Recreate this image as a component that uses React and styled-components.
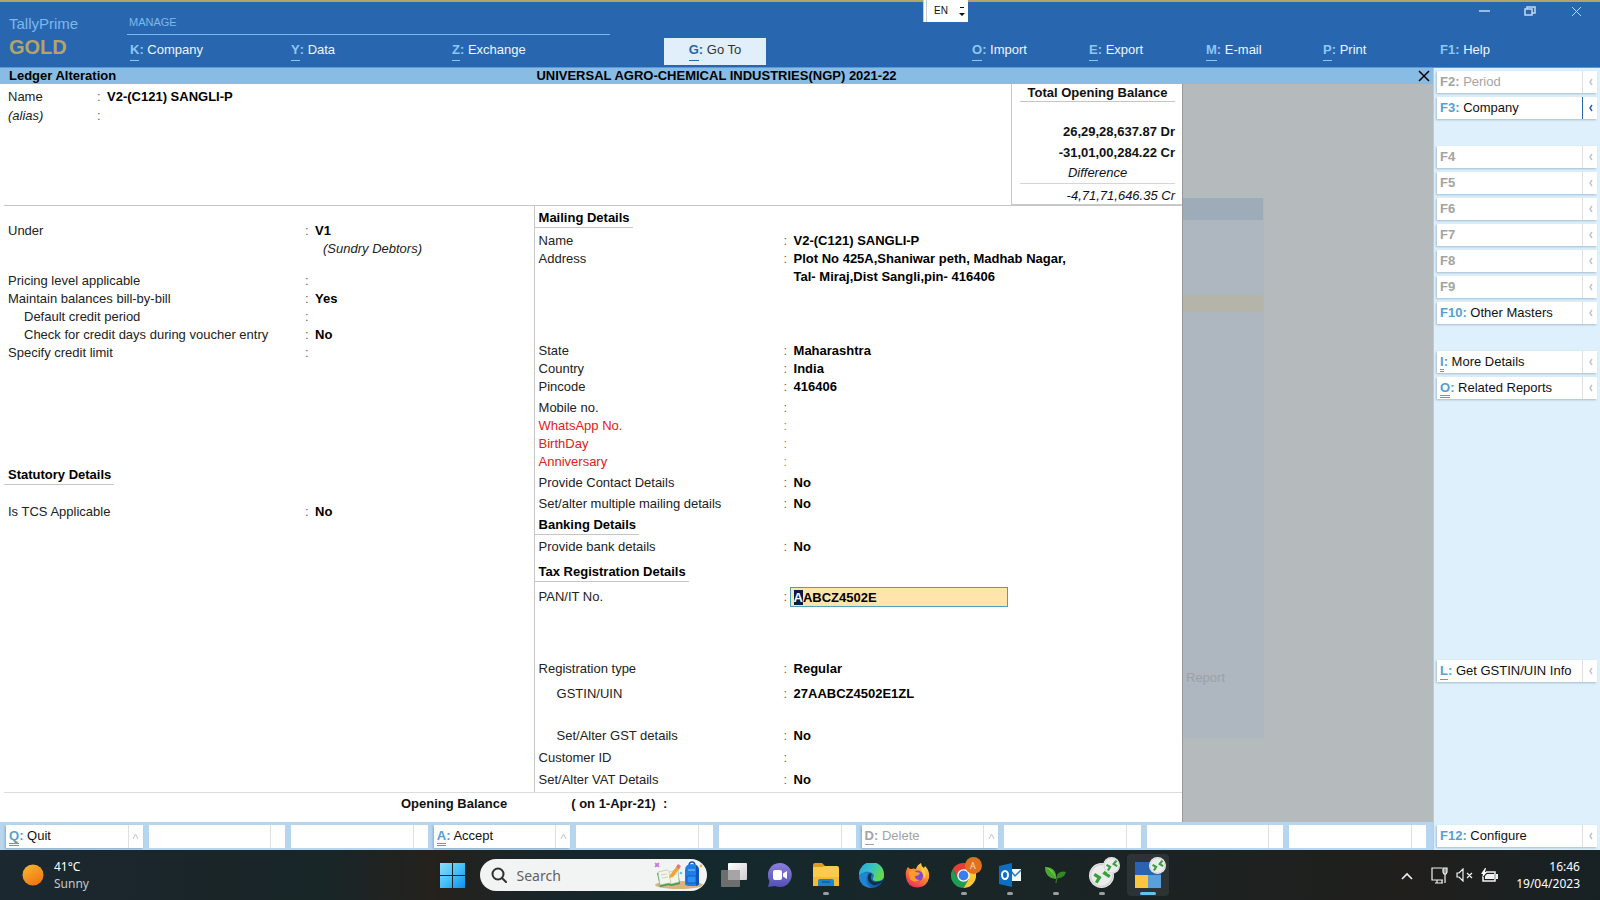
// App.jsx
import React, { useEffect, useRef } from "react";
import styled, { createGlobalStyle, css } from "styled-components";

const GlobalStyle = createGlobalStyle`
  * {
    box-sizing: border-box;
  }

  body {
    margin: 0;
    background: #b5babd;
    color: #111;
    font-family: "Liberation Sans", Arial, sans-serif;
    font-size: 13px;
    line-height: 18px;
  }

  h1, h2, p {
    margin: 0;
    font-size: 13px;
  }

  button, input {
    font: inherit;
    color: inherit;
    margin: 0;
    padding: 0;
    border: none;
    background: none;
  }

  button {
    cursor: pointer;
  }
`;

const Page = styled.div`
  display: flex;
  flex-direction: column;
  min-height: 100vh;
`;

/* ---------- top bar ---------- */

const TopBar = styled.header`
  position: relative;
  display: grid;
  grid-template-columns: 127px 483fr 54fr 102px 206fr 628fr;
  grid-template-rows: 33px 32px;
  background: #2867b0;
  border-top: 2px solid #b4a468;
  border-bottom: 1px solid #5b98d6;
`;

const Brand = styled.div`
  grid-row: 1 / 3;
  padding: 13px 0 0 9px;
  color: #7db8ec;
  font-size: 15px;
`;

const Edition = styled.div`
  margin-top: 3px;
  color: #b4a468;
  font-size: 20px;
  line-height: 22px;
  font-weight: bold;
`;

const ManageTitle = styled.div`
  grid-column: 2;
  display: flex;
  align-items: flex-end;
  padding: 0 2px 3px;
  border-bottom: 1px solid #7db8ec;
  color: #7db8ec;
  font-size: 11px;
`;

const ManageMenu = styled.nav`
  grid-column: 2;
  grid-row: 2;
  display: grid;
  grid-template-columns: repeat(3, 1fr);
  align-items: center;
  padding-left: 3px;
  margin-right: -3px;
`;

const ToolMenu = styled.nav`
  grid-column: 6;
  grid-row: 2;
  display: grid;
  grid-template-columns: repeat(4, 1fr) 160px;
  align-items: center;
`;

const WindowButtons = styled.div`
  grid-column: 6;
  grid-row: 1;
  display: flex;
  justify-content: flex-end;
  align-items: flex-start;
  padding-right: 1px;
`;

const WindowButton = styled.button`
  display: flex;
  justify-content: center;
  align-items: center;
  width: 46px;
  height: 18px;
  color: #c3d9ef;
`;

const MenuButton = styled.button`
  text-align: left;
  color: #eef6fd;
`;

const GoToButton = styled.button`
  grid-column: 4;
  grid-row: 2;
  align-self: center;
  height: 27px;
  background: #e1effb;
  color: #333;
`;

/* the bold letter before each command, underlined once or twice */
const Key = styled.b`
  color: ${({ $color }) => $color || "#8cc8f4"};
`;

const KeyLetter = styled.span`
  display: inline-block;
  height: ${({ $lines }) => ($lines === 2 ? 21 : 20)}px;
  ${({ $lines }) => $lines === 1 && css`border-bottom: 1px solid currentColor;`}
  ${({ $lines }) => $lines === 2 && css`border-bottom: 3px double currentColor;`}
`;

const Language = styled.button`
  position: absolute;
  top: -2px;
  left: 923px;
  display: flex;
  align-items: center;
  gap: 11px;
  width: 45px;
  height: 22px;
  padding-left: 7px;
  background: #fff;
  border-left: 4px double #ccc;
  color: #111;
  font-size: 10px;
`;

/* ---------- workspace ---------- */

const Middle = styled.div`
  flex: 1;
  display: grid;
  grid-template-columns: minmax(0, 1fr) 167px;
`;

const Workspace = styled.main`
  display: flex;
  flex-direction: column;
`;

const TitleBar = styled.div`
  display: grid;
  grid-template-columns: 1fr auto 1fr;
  align-items: center;
  height: 16px;
  background: #88bce4;
  color: #000;
  line-height: 16px;
`;

const ScreenName = styled.b`
  padding-left: 9px;
`;

const CloseButton = styled.button`
  justify-self: end;
  display: flex;
  width: 15px;
`;

const Desk = styled.div`
  flex: 1;
  display: grid;
  grid-template-columns: 1183fr 250fr;
`;

const Ledger = styled.section`
  display: flex;
  flex-direction: column;
  background: #fff;
  border-right: 1px solid #96999b;
`;

const LedgerTop = styled.div`
  display: flex;
  justify-content: space-between;
  height: 122px;
  margin-left: 4px;
  padding-left: 4px;
  border-bottom: 1px solid #c6c6c6;
`;

const TopFields = styled.div`
  padding-top: 4px;
`;

const Balance = styled.div`
  width: 171px;
  padding: 0 7px 0 8px;
  border-left: 1px solid #c9c9c9;
  border-bottom: 1px solid #c9c9c9;
  text-align: right;
  line-height: 21px;
`;

const BalanceTitle = styled.h2`
  margin-bottom: 19px;
  border-bottom: 1px solid #c6c6c6;
  line-height: 17px;
  text-align: center;
`;

const BalanceAmount = styled.p`
  font-weight: bold;
`;

const BalanceNote = styled.p`
  border-bottom: 1px solid #d6d6d6;
  font-style: italic;
  line-height: 20px;
  text-align: center;
`;

const BalanceTotal = styled.p`
  font-style: italic;
  line-height: 23px;
`;

const LedgerBody = styled.div`
  flex: 1;
  display: grid;
  grid-template-columns: 530fr 649fr;
  margin-left: 4px;
  border-bottom: 1px solid #ddd;
`;

const Column = styled.div`
  border-left: ${({ $side }) => ($side === "right" ? "1px solid #c6c6c6" : "none")};
`;

const Heading = styled.h2`
  width: fit-content;
  margin-top: ${({ $gap }) => $gap}px;
  padding: 0 3px 0 4px;
  border-bottom: 1px solid #c6c6c6;
  color: #000;
`;

const Row = styled.div`
  display: grid;
  grid-template-columns: ${({ $label }) => $label}px 8px auto;
  margin-top: ${({ $gap }) => $gap || 0}px;
  padding-left: ${({ $inset }) => $inset || 0}px;
  color: ${({ $red }) => ($red ? "#e02020" : "#222")};
  white-space: nowrap;
`;

const Label = styled.label`
  padding-left: ${({ $indent }) => $indent || 0}px;
  font-style: ${({ $italic }) => ($italic ? "italic" : "normal")};
`;

const Colon = styled.span`
  opacity: 0.7;
`;

const Value = styled.span`
  padding-left: 2px;
  color: #000;
  font-weight: bold;
`;

const Parent = styled.span`
  padding-left: 10px;
  font-style: italic;
`;

const PanInput = styled.input`
  width: 218px;
  height: 20px;
  margin: -1px 0 -1px -2px;
  padding-left: 3px;
  background: #ffe5ab;
  border: 1px solid #4f9fb8;
  color: #000;
  font-weight: bold;
  outline: none;
  caret-color: transparent;

  &::selection {
    background: #081a4c;
    color: #fff;
  }
`;

const OpeningBalance = styled.div`
  display: flex;
  gap: 64px;
  padding: 2px 0 9px 401px;
  font-weight: bold;
  white-space: pre;
`;

/* the dimmed menu that stays behind the open ledger */
const Behind = styled.div`
  padding-top: 114px;
  background: #b5babd;
`;

const DimMenu = styled.div`
  width: 81px;
  height: 540px;
  background: #aeb6bf;
  border-right: 1px solid #b0b7bb;
  color: #9ba2a9;
`;

const DimTitle = styled.div`
  height: 22px;
  margin-bottom: 75px;
  background: #9eabb8;
`;

const DimChoice = styled.div`
  height: 17px;
  margin-bottom: 357px;
  background: #b4b5a8;
`;

const DimItem = styled.div`
  padding-left: 3px;
`;

const BottomBar = styled.div`
  display: grid;
  grid-template-columns: repeat(10, 1fr);
  gap: 6px;
  padding: 3px 7px 2px 6px;
  background: #b6d6ef;
`;

/* ---------- command buttons (bottom and right) ---------- */

const Command = styled.button`
  display: flex;
  justify-content: space-between;
  height: ${({ $short }) => ($short ? 23 : 22)}px;
  padding-left: 3px;
  background: #fff;
  box-shadow: ${({ $plain }) => ($plain ? "none" : "-1px 1px 2px rgba(60, 90, 120, 0.35)")};
  color: ${({ $off }) => ($off ? "#a3a3a3" : "#111")};
  line-height: 21px;
  text-align: left;
`;

const Arrow = styled.span`
  display: flex;
  justify-content: center;
  align-items: center;
  width: 15px;
  height: 100%;
  border-left: 1px solid ${({ $on }) => ($on ? "#2867b0" : "#dfdfdf")};
  color: ${({ $on }) => ($on ? "#2867b0" : "#c4c4c4")};
`;

const Sidebar = styled.aside`
  display: flex;
  flex-direction: column;
  padding: 3px;
  background: #def0fc;
  border-left: 1px solid #a8d0f0;
`;

const Group = styled.div`
  display: flex;
  flex-direction: column;
  gap: 4px;
  margin-bottom: ${({ $gap }) => $gap || 0}px;
`;

const Spacer = styled.div`
  flex: ${({ $grow }) => $grow};
`;

/* ---------- taskbar ---------- */

const Taskbar = styled.footer`
  display: grid;
  grid-template-columns: 1fr auto 1fr;
  align-items: center;
  height: 50px;
  background: linear-gradient(90deg, #1b2830 0%, #1a2528 14%, #182628 20%, #25211c 27%, #17262a 35%, #14292d 45%, #192527 62%, #201f1c 88%, #172124 100%);
  color: #fff;
  font-family: "Noto Sans", "Open Sans", sans-serif;
  font-size: 12px;
  line-height: 17px;
`;

const Weather = styled.button`
  display: flex;
  align-items: center;
  gap: 10px;
  justify-self: start;
  padding-left: 22px;
  text-align: left;
`;

const WeatherNote = styled.div`
  color: #c5c9ca;
`;

const Apps = styled.div`
  display: flex;
  align-items: center;
  gap: 4px;
`;

const AppButton = styled.button`
  position: relative;
  display: flex;
  justify-content: center;
  align-items: center;
  width: 42px;
  height: 42px;
  border-radius: 4px;
  background: ${({ $active }) => ($active ? "#2b3334" : "none")};

  &::after {
    content: "";
    position: absolute;
    bottom: 1px;
    left: 50%;
    width: ${({ $active }) => ($active ? 16 : 6)}px;
    height: 3px;
    margin-left: ${({ $active }) => ($active ? -8 : -3)}px;
    border-radius: 2px;
    background: ${({ $active }) => ($active ? "#60c3f0" : "#9a9fa0")};
    display: ${({ $open }) => ($open ? "block" : "none")};
  }
`;

const Badge = styled.span`
  position: absolute;
  top: 3px;
  right: 3px;
  display: flex;
  justify-content: center;
  align-items: center;
  width: 17px;
  height: 17px;
  border-radius: 50%;
  background: ${({ $color }) => $color};
  color: #f6dcc8;
  font-size: 9px;
`;

const SearchBox = styled.label`
  display: flex;
  align-items: center;
  width: 227px;
  height: 32px;
  margin: 0 2px;
  padding: 0 3px 0 11px;
  border-radius: 16px;
  background: #f2f3f3;
`;

const SearchInput = styled.input`
  flex: 1;
  min-width: 0;
  padding-left: 10px;
  font-size: 14px;
  outline: none;

  &::placeholder {
    color: #5f6263;
    opacity: 1;
  }
`;

const Tray = styled.div`
  display: flex;
  align-items: center;
  justify-self: end;
  padding-right: 20px;
`;

const TrayIcons = styled.button`
  display: flex;
  align-items: center;
  gap: 8px;
  margin: 0 18px;
`;

const Clock = styled.button`
  text-align: right;
`;

/* ---------- drawings ---------- */

const WindowsLogo = () => (
  <svg width="25" height="25" viewBox="0 0 25 25">
    <defs>
      <linearGradient id="win" x1="0" y1="0" x2="1" y2="1">
        <stop offset="0" stopColor="#8be0fb" />
        <stop offset="0.5" stopColor="#45c2f7" />
        <stop offset="1" stopColor="#0d8df0" />
      </linearGradient>
    </defs>
    <path fill="url(#win)" d="M0 0h12v12H0zM13 0h12v12H13zM0 13h12v12H0zM13 13h12v12H13z" />
  </svg>
);

const SunIcon = () => (
  <svg width="22" height="22" viewBox="0 0 22 22">
    <defs>
      <linearGradient id="sun" x1="0.2" y1="0" x2="0.8" y2="1">
        <stop offset="0" stopColor="#f7b52f" />
        <stop offset="1" stopColor="#f0700f" />
      </linearGradient>
    </defs>
    <circle cx="11" cy="11" r="10.5" fill="url(#sun)" />
  </svg>
);

const SearchArt = () => (
  <svg width="52" height="28" viewBox="0 0 52 28">
    <ellipse cx="27" cy="24" rx="24" ry="4" fill="#d9b380" />
    <path d="M5 12l10-2 3 3 8-3 2 13-9 2-2-1-9 2z" fill="#3f9b54" />
    <path d="M6 11l9-2 3 2 8-3 1 13-8 2-2-1-9 2z" fill="#f3f6ea" stroke="#a8c8a0" strokeWidth="0.7" />
    <path d="M17 11l2 12M9 14l6-1M10 17l6-1M20 14l5-1" stroke="#a9bda6" strokeWidth="0.6" />
    <path d="M18 14l7-9 3 2-7 9-4 1z" fill="#f2a33a" />
    <path d="M24 6l2-3 3 2-2 3z" fill="#e67585" />
    <path d="M3 2l2 1 2-1-1 2 1 2-2-1-2 1 1-2z" fill="#c77be0" stroke="#c77be0" />
    <path d="M37 5q0-4 3-4t3 4" stroke="#1456b8" strokeWidth="1.6" fill="none" />
    <path d="M33 9q0-6 7-6t7 6v14q0 2-7 2t-7-2z" fill="#1f7ee8" />
    <path d="M44 4q3 2 3 5v14q0 1-3 2z" fill="#0f54bd" />
    <path d="M35 15h9v7h-9z" fill="#2a91f5" stroke="#0f54bd" strokeWidth="0.8" />
    <path d="M36 9h7" stroke="#7fc0ff" strokeWidth="1.2" />
    <circle cx="49" cy="5" r="1.4" fill="#f1b434" />
    <circle cx="29" cy="12" r="1.3" fill="#54c9e8" />
  </svg>
);

const TaskViewIcon = () => (
  <svg width="26" height="24" viewBox="0 0 26 24">
    <defs>
      <linearGradient id="view" x1="0" y1="0" x2="1" y2="1">
        <stop offset="0" stopColor="#fff" />
        <stop offset="1" stopColor="#cfcfcf" />
      </linearGradient>
    </defs>
    <rect x="7" y="0" width="19" height="17" rx="1" fill="url(#view)" />
    <rect x="0" y="7" width="19" height="17" rx="1" fill="#777" fillOpacity="0.9" />
    <path d="M7 7h12v10H7z" fill="#a5a5a5" />
  </svg>
);

const ChatIcon = () => (
  <svg width="24" height="24" viewBox="0 0 24 24">
    <defs>
      <linearGradient id="chat" x1="0" y1="0" x2="0" y2="1">
        <stop offset="0" stopColor="#8b7fd8" />
        <stop offset="1" stopColor="#5450b8" />
      </linearGradient>
    </defs>
    <path d="M12 0a12 12 0 1 1-5 23L0 24l1.5-6A12 12 0 0 1 12 0z" fill="url(#chat)" />
    <rect x="5" y="7" width="9" height="10" rx="2" fill="#fff" />
    <path d="M15 10.5l4-2.5v8l-4-2.5z" fill="#fff" />
  </svg>
);

const FolderIcon = () => (
  <svg width="26" height="24" viewBox="0 0 26 24">
    <path d="M0 2q0-2 2-2h7l3 3v4H0z" fill="#dd9c1c" />
    <path d="M0 5q0-1 1-1h8l3-1h12q2 0 2 2v18H0z" fill="#fbcb4b" />
    <path d="M0 14h26v9H0z" fill="#f5bb36" />
    <path d="M5 18q0-2 2-2h12q2 0 2 2v5H5z" fill="#1c84cf" />
    <path d="M9 19h8" stroke="#0d5f9f" strokeWidth="1.5" />
  </svg>
);

const EdgeIcon = () => (
  <svg width="25" height="25" viewBox="0 0 25 25">
    <defs>
      <linearGradient id="edgeTop" x1="0" y1="0" x2="1" y2="0.5">
        <stop offset="0" stopColor="#2b9fe0" />
        <stop offset="0.5" stopColor="#35c1c8" />
        <stop offset="1" stopColor="#63d94f" />
      </linearGradient>
      <linearGradient id="edgeLow" x1="0" y1="0" x2="1" y2="1">
        <stop offset="0" stopColor="#2396e0" />
        <stop offset="1" stopColor="#0f4f9c" />
      </linearGradient>
    </defs>
    <circle cx="12.5" cy="12.5" r="12.5" fill="url(#edgeLow)" />
    <path d="M0 12A12.5 12.5 0 0 1 25 11q1 7-7 7-5 0-4-3 2-3-1-5Q8 6 0 12z" fill="url(#edgeTop)" />
    <path d="M9 12q-2 7 5 10 5 1 9-3a12 12 0 0 0 1-2q-9 5-12-1-1-3 1-5-2-2-4 1z" fill="#142f4b" />
    <path d="M9 11q-5 8 3 14-11-1-12-11 4-6 9-3z" fill="#1f86d4" />
  </svg>
);

const FirefoxIcon = () => (
  <svg width="25" height="25" viewBox="0 0 25 25">
    <defs>
      <linearGradient id="fox" x1="0.8" y1="0" x2="0.2" y2="1">
        <stop offset="0" stopColor="#ffe14a" />
        <stop offset="0.45" stopColor="#ff8a2a" />
        <stop offset="1" stopColor="#f0245e" />
      </linearGradient>
    </defs>
    <path d="M3 4q1 2 3 2 3-1 5 0 1-4 5-6 0 3 3 5l1-2q5 5 4 12-2 9-11.5 9.500Q2 24 1 14 0 8 3 4z" fill="url(#fox)" />
    <circle cx="12.5" cy="13" r="5.5" fill="#7f48d8" />
    <path d="M4 8q5-2 7 1l4 1q-1 3-5 3 0 4 5 4-6 4-10-1-2-4-1-8z" fill="#ff9b2d" />
    <path d="M17 9q3 3 1 7 4-3 2-8-1-3-4-3z" fill="#ffd23e" />
  </svg>
);

const ChromeIcon = () => (
  <svg width="25" height="25" viewBox="0 0 24 24">
    <path d="M12 12L1.600 6A12 12 0 0 1 22.400 6z" fill="#e34133" />
    <path d="M1.600 6l5.200 9 5.200-9z" fill="#e34133" />
    <path d="M12 24A12 12 0 0 1 1.600 6l5.200 9 5.200-3 5.200 3z" fill="#1f9d55" />
    <path d="M17.200 15L12 24A12 12 0 0 0 22.400 6H12v6z" fill="#fcc934" />
    <circle cx="12" cy="12" r="6" fill="#fff" />
    <circle cx="12" cy="12" r="4.7" fill="#3b7ded" />
  </svg>
);

const OutlookIcon = () => (
  <svg width="24" height="24" viewBox="0 0 24 24">
    <path d="M13 6h10v12H13z" fill="#f4f9fd" />
    <path d="M13 8l4 5 6-6" stroke="#2b79c2" strokeWidth="1.5" fill="none" />
    <path d="M1 3l13-3v24L1 21z" fill="#0e6fc2" />
    <ellipse cx="7" cy="12" rx="3" ry="4" fill="none" stroke="#fff" strokeWidth="2" />
  </svg>
);

const LeafIcon = () => (
  <svg width="23" height="18" viewBox="0 0 23 18">
    <path d="M1 1q12 0 11 12Q1 12 1 1z" fill="#4aa832" />
    <path d="M1 1q9 5 11 12Q10 3 1 1z" fill="#8ad650" />
    <path d="M22 6q-8-2-10 6 8 1 10-6z" fill="#2f8a26" />
    <path d="M12 17q0-5 4-8" stroke="#3c7a2a" strokeWidth="1.2" fill="none" />
  </svg>
);

const RemoteIcon = ({ size }) => (
  <svg width={size} height={size} viewBox="0 0 24 24">
    <circle cx="12" cy="12" r="12" fill="#ececec" />
    <circle cx="12" cy="12" r="10.5" fill="none" stroke="#cdcdcd" />
    <path d="M5 11l5 3-3 5M19 5l-4 5 5 3" stroke="#379f3c" strokeWidth="3" fill="none" />
  </svg>
);

const TallyIcon = () => (
  <svg width="26" height="26" viewBox="0 0 26 26">
    <path d="M0 0h26v13H0z" fill="#2a64b0" />
    <path d="M0 13h13v13H0z" fill="#fdc63f" />
    <path d="M13 13h13v13H13z" fill="#5a9fdb" />
  </svg>
);

const MagnifierIcon = () => (
  <svg width="16" height="16" viewBox="0 0 16 16" fill="none" stroke="#2d2f30" strokeWidth="2">
    <circle cx="7" cy="7" r="5.5" />
    <path d="M11 11l4 4" strokeLinecap="round" />
  </svg>
);

const ChevronUp = () => (
  <svg width="12" height="8" viewBox="0 0 12 8" fill="none" stroke="#f2f2f2" strokeWidth="1.6">
    <path d="M1 7l5-5 5 5" />
  </svg>
);

const NetworkIcon = () => (
  <svg width="17" height="17" viewBox="0 0 17 17" fill="none" stroke="#f2f2f2" strokeWidth="1.2">
    <path d="M11 1H1v12h11M4 16h8M6 13v3M11 13v3M14 6v10" />
    <path d="M12 1h4v4l-1 2h-2l-1-2z" fill="#8e9292" />
  </svg>
);

const SpeakerIcon = () => (
  <svg width="17" height="14" viewBox="0 0 17 14" fill="none" stroke="#f2f2f2" strokeWidth="1.2">
    <path d="M1 5h2l4-4v12L3 9H1zM11 5l5 5M16 5l-5 5" />
  </svg>
);

const BatteryIcon = () => (
  <svg width="17" height="15" viewBox="0 0 17 15">
    <path d="M5 4h9v9H2V9" fill="none" stroke="#f2f2f2" strokeWidth="1.5" />
    <path d="M6 6h7v5H4V8zM15 6h2v5h-2z" fill="#f2f2f2" />
    <path d="M4 0L0 6h2L1 10l5-6H4l1-4z" fill="#fff" />
  </svg>
);

const LeftArrow = () => (
  <svg width="5" height="8" viewBox="0 0 5 8" fill="none" stroke="currentColor" strokeWidth="1.5">
    <path d="M4 1L2 4l2 3" />
  </svg>
);

const UpArrow = () => (
  <svg width="7" height="7" viewBox="0 0 7 7" fill="none" stroke="currentColor">
    <path d="M1 6l2.500-5L6 6" />
  </svg>
);

/* ---------- data ---------- */

const leftRows = [
  { label: "Under", value: "V1", gap: 16 },
  { label: "", parent: "(Sundry Debtors)" },
  { label: "Pricing level applicable", gap: 14 },
  { label: "Maintain balances bill-by-bill", value: "Yes" },
  { label: "Default credit period", indent: 16 },
  { label: "Check for credit days during voucher entry", value: "No", indent: 16 },
  { label: "Specify credit limit" },
  { heading: "Statutory Details", gap: 104 },
  { label: "Is TCS Applicable", value: "No", gap: 18 },
];

const rightRows = [
  { heading: "Mailing Details", gap: 3 },
  { label: "Name", value: "V2-(C121) SANGLI-P", gap: 4 },
  { label: "Address", value: "Plot No 425A,Shaniwar peth, Madhab Nagar," },
  { label: "", value: "Tal- Miraj,Dist Sangli,pin- 416406", noColon: true },
  { label: "State", value: "Maharashtra", gap: 56 },
  { label: "Country", value: "India" },
  { label: "Pincode", value: "416406" },
  { label: "Mobile no.", gap: 3 },
  { label: "WhatsApp No.", red: true },
  { label: "BirthDay", red: true },
  { label: "Anniversary", red: true },
  { label: "Provide Contact Details", value: "No", gap: 3 },
  { label: "Set/alter multiple mailing details", value: "No", gap: 3 },
  { heading: "Banking Details", gap: 3 },
  { label: "Provide bank details", value: "No", gap: 3 },
  { heading: "Tax Registration Details", gap: 7 },
  { label: "PAN/IT No.", input: "AABCZ4502E", gap: 6 },
  { label: "Registration type", value: "Regular", gap: 54 },
  { label: "GSTIN/UIN", value: "27AABCZ4502E1ZL", indent: 18, gap: 7 },
  { label: "Set/Alter GST details", value: "No", indent: 18, gap: 24 },
  { label: "Customer ID", gap: 4 },
  { label: "Set/Alter VAT Details", value: "No", gap: 4 },
];

const bottomCommands = [
  { letter: "Q", text: "Quit", lines: 2 },
  {},
  {},
  { letter: "A", text: "Accept", lines: 2 },
  {},
  {},
  { letter: "D", text: "Delete", lines: 1, off: true },
  {},
  {},
  {},
];

/* ---------- parts ---------- */

const CommandText = ({ letter, text, lines, color }) => (
  <span>
    <Key $color={color}>
      <KeyLetter $lines={lines}>{letter}</KeyLetter>
      {text && ":"}
    </Key>
    {text && ` ${text}`}
  </span>
);

const SideCommand = ({ letter, text, lines, off, on }) => (
  <Command disabled={off} $off={off}>
    <CommandText letter={letter} text={text} lines={lines} color={off ? "#a3a3a3" : "#559fd2"} />
    <Arrow $on={on}>
      <LeftArrow />
    </Arrow>
  </Command>
);

const PanField = ({ id, value }) => {
  const ref = useRef(null);

  useEffect(() => {
    ref.current.focus();
    ref.current.setSelectionRange(0, 1);
  }, []);

  return <PanInput id={id} ref={ref} defaultValue={value} />;
};

const FieldRow = ({ row, side }) => {
  if (row.heading) {
    return <Heading $gap={row.gap}>{row.heading}</Heading>;
  }

  return (
    <Row $gap={row.gap} $red={row.red} $inset={4} $label={side === "right" ? 245 : 297}>
      <Label as={row.input ? "label" : "span"} htmlFor={row.input && "pan"} $indent={row.indent}>
        {row.label}
      </Label>
      <Colon>{row.parent || row.noColon ? "" : ":"}</Colon>
      {row.input && <PanField id="pan" value={row.input} />}
      {row.value && <Value>{row.value}</Value>}
      {row.parent && <Parent>{row.parent}</Parent>}
    </Row>
  );
};

const App = () => {
  return (
    <Page>
      <GlobalStyle />
      <TopBar>
        <Brand>
          TallyPrime
          <Edition>GOLD</Edition>
        </Brand>
        <ManageTitle>MANAGE</ManageTitle>
        <ManageMenu>
          <MenuButton><CommandText letter="K" text="Company" lines={1} /></MenuButton>
          <MenuButton><CommandText letter="Y" text="Data" lines={1} /></MenuButton>
          <MenuButton><CommandText letter="Z" text="Exchange" lines={1} /></MenuButton>
        </ManageMenu>
        <GoToButton>
          <CommandText letter="G" text="Go To" lines={1} color="#2867b0" />
        </GoToButton>
        <WindowButtons>
          <WindowButton aria-label="Minimize">
            <svg width="11" height="2" viewBox="0 0 11 2"><path d="M0 1h11" stroke="currentColor" strokeWidth="1.5" /></svg>
          </WindowButton>
          <WindowButton aria-label="Restore">
            <svg width="12" height="10" viewBox="0 0 12 10" fill="none" stroke="currentColor" strokeWidth="1.5">
              <path d="M1 3h7v6H1zM3 3V1h8v6H8" />
            </svg>
          </WindowButton>
          <WindowButton aria-label="Close window">
            <svg width="11" height="11" viewBox="0 0 11 11" stroke="currentColor"><path d="M1 1l9 9M10 1l-9 9" /></svg>
          </WindowButton>
        </WindowButtons>
        <ToolMenu>
          <MenuButton><CommandText letter="O" text="Import" lines={1} /></MenuButton>
          <MenuButton><CommandText letter="E" text="Export" lines={1} /></MenuButton>
          <MenuButton><CommandText letter="M" text="E-mail" lines={1} /></MenuButton>
          <MenuButton><CommandText letter="P" text="Print" lines={1} /></MenuButton>
          <MenuButton><CommandText letter="F1" text="Help" /></MenuButton>
        </ToolMenu>
        <Language>
          EN
          <svg width="6" height="12" viewBox="0 0 6 12"><path d="M1 2h4v1H1zM0 8h6L3 11z" fill="#111" /></svg>
        </Language>
      </TopBar>

      <Middle>
        <Workspace>
          <TitleBar>
            <ScreenName>Ledger Alteration</ScreenName>
            <b>UNIVERSAL AGRO-CHEMICAL INDUSTRIES(NGP) 2021-22</b>
            <CloseButton aria-label="Close">
              <svg width="12" height="12" viewBox="0 0 12 12" stroke="#000" strokeWidth="1.5"><path d="M1 1l10 10M11 1L1 11" /></svg>
            </CloseButton>
          </TitleBar>
          <Desk>
            <Ledger>
              <LedgerTop>
                <TopFields>
                  <Row $label={89}>
                    <span>Name</span>
                    <Colon>:</Colon>
                    <Value>V2-(C121) SANGLI-P</Value>
                  </Row>
                  <Row $label={89} $gap={1}>
                    <Label as="span" $italic>(alias)</Label>
                    <Colon>:</Colon>
                  </Row>
                </TopFields>
                <Balance>
                  <BalanceTitle>Total Opening Balance</BalanceTitle>
                  <BalanceAmount>26,29,28,637.87 Dr</BalanceAmount>
                  <BalanceAmount>-31,01,00,284.22 Cr</BalanceAmount>
                  <BalanceNote>Difference</BalanceNote>
                  <BalanceTotal>-4,71,71,646.35 Cr</BalanceTotal>
                </Balance>
              </LedgerTop>
              <LedgerBody>
                <Column>
                  {leftRows.map((row, i) => (
                    <FieldRow key={i} row={row} side="left" />
                  ))}
                </Column>
                <Column $side="right">
                  {rightRows.map((row, i) => (
                    <FieldRow key={i} row={row} side="right" />
                  ))}
                </Column>
              </LedgerBody>
              <OpeningBalance>
                <span>Opening Balance</span>
                <span>( on 1-Apr-21)  :</span>
              </OpeningBalance>
            </Ledger>
            <Behind>
              <DimMenu>
                <DimTitle />
                <DimChoice />
                <DimItem>Report</DimItem>
              </DimMenu>
            </Behind>
          </Desk>
          <BottomBar>
            {bottomCommands.map((item, i) => (
              <Command key={i} $short $plain={!item.text} $off={item.off} disabled={!item.text || item.off}>
                <CommandText {...item} color={item.off ? "#a3a3a3" : "#559fd2"} />
                <Arrow>{item.text && <UpArrow />}</Arrow>
              </Command>
            ))}
          </BottomBar>
        </Workspace>

        <Sidebar>
          <Group $gap={27}>
            <SideCommand letter="F2" text="Period" off />
            <SideCommand letter="F3" text="Company" on />
          </Group>
          <Group $gap={27}>
            {["F4", "F5", "F6", "F7", "F8", "F9"].map((name) => (
              <SideCommand key={name} letter={name} off />
            ))}
            <SideCommand letter="F10" text="Other Masters" />
          </Group>
          <Group>
            <SideCommand letter="I" text="More Details" lines={2} />
            <SideCommand letter="O" text="Related Reports" lines={2} />
          </Group>
          <Spacer $grow={11} />
          <SideCommand letter="L" text="Get GSTIN/UIN Info" lines={1} />
          <Spacer $grow={6} />
          <SideCommand letter="F12" text="Configure" />
        </Sidebar>
      </Middle>

      <Taskbar>
        <Weather>
          <SunIcon />
          <div>
            <div>41°C</div>
            <WeatherNote>Sunny</WeatherNote>
          </div>
        </Weather>
        <Apps>
          <AppButton aria-label="Start"><WindowsLogo /></AppButton>
          <SearchBox>
            <MagnifierIcon />
            <SearchInput type="text" placeholder="Search" aria-label="Search" />
            <SearchArt />
          </SearchBox>
          <AppButton aria-label="Task view"><TaskViewIcon /></AppButton>
          <AppButton aria-label="Chat"><ChatIcon /></AppButton>
          <AppButton aria-label="File Explorer" $open><FolderIcon /></AppButton>
          <AppButton aria-label="Edge"><EdgeIcon /></AppButton>
          <AppButton aria-label="Firefox"><FirefoxIcon /></AppButton>
          <AppButton aria-label="Chrome" $open>
            <ChromeIcon />
            <Badge $color="#e2711d">A</Badge>
          </AppButton>
          <AppButton aria-label="Outlook" $open><OutlookIcon /></AppButton>
          <AppButton aria-label="Leaf" $open><LeafIcon /></AppButton>
          <AppButton aria-label="Remote Desktop" $open>
            <RemoteIcon size={25} />
            <Badge><RemoteIcon size={17} /></Badge>
          </AppButton>
          <AppButton aria-label="Tally" $open $active>
            <TallyIcon />
            <Badge><RemoteIcon size={17} /></Badge>
          </AppButton>
        </Apps>
        <Tray>
          <button aria-label="Hidden icons"><ChevronUp /></button>
          <TrayIcons aria-label="Network, sound and battery">
            <NetworkIcon />
            <SpeakerIcon />
            <BatteryIcon />
          </TrayIcons>
          <Clock>
            <div>16:46</div>
            <div>19/04/2023</div>
          </Clock>
        </Tray>
      </Taskbar>
    </Page>
  );
};

export default App;
